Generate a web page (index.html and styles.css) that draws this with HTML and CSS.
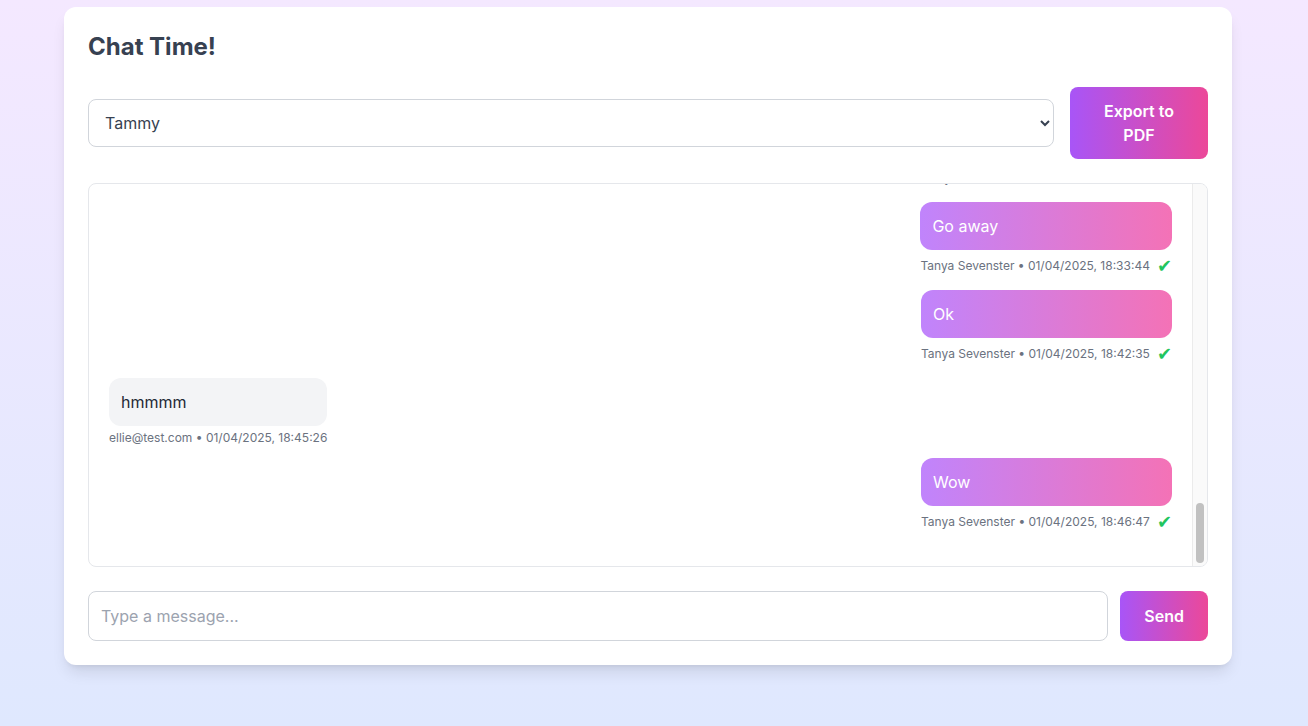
FILE: index.html
```html
<!DOCTYPE html>
<html lang="en">

<head>
    <meta charset="UTF-8">
    <meta name="viewport" content="width=device-width, initial-scale=1.0">
    <title>Chat Time!</title>
    <link rel="stylesheet" href="styles.css">
</head>

<body>
    <div class="card">
        <h1>Chat Time!</h1>

        <div class="toolbar">
            <select class="user-select">
                <option>Tammy</option>
                <option>Ellie</option>
                <option>Tanya</option>
            </select>
            <button class="btn export-btn">Export to PDF</button>
        </div>

        <div class="chat-box">
            <div class="chat-scroll" id="chat-scroll">
                <div class="messages" id="messages"></div>
            </div>
            <!-- custom scrollbar -->
            <div class="scrollbar">
                <div class="scroll-thumb" id="scroll-thumb"></div>
            </div>
        </div>

        <div class="composer">
            <input type="text" class="message-input" placeholder="Type a message...">
            <button class="btn send-btn">Send</button>
        </div>
    </div>

    <script>
        // messages for the selected conversation
        const me = "Tanya Sevenster";
        const history = [
            ["ellie@test.com", "Hello?", "01/04/2025, 16:48:09"],
            [me, "Yo", "01/04/2025, 16:55:31"],
            ["ellie@test.com", "Hey!", "01/04/2025, 17:02:11"],
            [me, "Hi Ellie", "01/04/2025, 17:03:40"],
            ["ellie@test.com", "How are you?", "01/04/2025, 17:05:02"],
            [me, "Good thanks, you?", "01/04/2025, 17:06:19"],
            ["ellie@test.com", "Not bad", "01/04/2025, 17:08:55"],
            [me, "Cool", "01/04/2025, 17:10:03"],
            ["ellie@test.com", "Are you coming tonight?", "01/04/2025, 17:21:37"],
            [me, "Maybe", "01/04/2025, 17:24:12"],
            ["ellie@test.com", "Come on", "01/04/2025, 17:25:48"],
            [me, "I'm tired", "01/04/2025, 17:31:20"],
            ["ellie@test.com", "It'll be fun", "01/04/2025, 17:33:09"],
            [me, "We'll see", "01/04/2025, 17:40:44"],
            ["ellie@test.com", "Tammy is coming too", "01/04/2025, 17:52:30"],
            [me, "Oh really", "01/04/2025, 17:55:01"],
            ["ellie@test.com", "Yes", "01/04/2025, 18:01:16"],
            [me, "Hmm ok", "01/04/2025, 18:05:58"],
            ["ellie@test.com", "So?", "01/04/2025, 18:12:27"],
            [me, "Still thinking", "01/04/2025, 18:15:39"],
            ["ellie@test.com", "Hurry up", "01/04/2025, 18:24:02"],
            [me, "Stop", "01/04/2025, 18:29:18"],
            ["ellie@test.com", "Please", "01/04/2025, 18:31:50"],
            [me, "Test", "01/04/2025, 18:32:51"],
            [me, "Go away", "01/04/2025, 18:33:44"],
            [me, "Ok", "01/04/2025, 18:42:35"],
            ["ellie@test.com", "hmmmm", "01/04/2025, 18:45:26"],
            [me, "Wow", "01/04/2025, 18:46:47"]
        ];

        function renderMessages() {
            const list = document.getElementById("messages");
            list.innerHTML = "";

            history.forEach(([sender, text, time]) => {
                const own = sender === me;
                const msg = document.createElement("div");
                msg.className = "msg " + (own ? "own" : "other");

                const bubble = document.createElement("div");
                bubble.className = "bubble";
                bubble.textContent = text;

                const meta = document.createElement("div");
                meta.className = "meta";
                meta.innerHTML = "<span>" + sender + " \u2022 " + time + "</span>" +
                    (own ? "<span class='tick'>\u2714</span>" : "");

                msg.appendChild(bubble);
                msg.appendChild(meta);
                list.appendChild(msg);
            });

            // keep the newest message in view
            const box = document.getElementById("chat-scroll");
            box.scrollTop = box.scrollHeight;
            updateThumb();
        }

        // size and place the scrollbar thumb
        function updateThumb() {
            const box = document.getElementById("chat-scroll");
            const thumb = document.getElementById("scroll-thumb");
            const track = box.clientHeight - 6;
            const size = Math.max(24, track * box.clientHeight / box.scrollHeight);
            const max = box.scrollHeight - box.clientHeight;
            const top = max > 0 ? (box.scrollTop / max) * (track - size) : 0;
            thumb.style.height = size + "px";
            thumb.style.top = (3 + top) + "px";
        }

        document.getElementById("chat-scroll").addEventListener("scroll", updateThumb);
        renderMessages();
    </script>
</body>

</html>
```

FILE: styles.css
```css
/* styles.css */
body {
    font-family: Inter, "Noto Sans", sans-serif;
    background: linear-gradient(to bottom, #f4e8ff, #dfe8fe);
    margin: 0;
    padding: 7px 0 0 64px;
    min-height: 100vh;
    box-sizing: border-box;
}

.card {
    width: 1168px;
    box-sizing: border-box;
    padding: 24px;
    background-color: white;
    border-radius: 12px;
    box-shadow: 0 10px 15px -3px rgba(0, 0, 0, 0.1), 0 4px 6px -4px rgba(0, 0, 0, 0.1);
}

h1 {
    margin: 0 0 24px;
    font-size: 24px;
    line-height: 32px;
    font-weight: 700;
    color: #374151;
}

.toolbar {
    display: flex;
    align-items: center;
    gap: 16px;
    margin-bottom: 24px;
}

.user-select {
    flex: 1;
    height: 48px;
    padding: 0 12px;
    font-family: inherit;
    font-size: 16px;
    color: #374151;
    background-color: white;
    border: 1px solid #d1d5db;
    border-radius: 8px;
}

.btn {
    font-family: inherit;
    font-size: 16px;
    line-height: 24px;
    font-weight: 600;
    color: white;
    border: none;
    border-radius: 8px;
    background: linear-gradient(to right, #a855f7, #ec4899);
    cursor: pointer;
}

.export-btn {
    width: 138px;
    padding: 12px 24px;
}

.chat-box {
    position: relative;
    height: 384px;
    box-sizing: border-box;
    overflow: hidden;
    border: 1px solid #e5e7eb;
    border-radius: 8px;
    margin-bottom: 24px;
}

.chat-scroll {
    height: 100%;
    box-sizing: border-box;
    overflow-y: auto;
    padding: 20px 35px 20px 20px;
    scrollbar-width: none;
}

.scrollbar {
    position: absolute;
    top: 0;
    right: 0;
    bottom: 0;
    width: 14px;
    background-color: #fafafa;
    border-left: 1px solid #ebebeb;
}

.scroll-thumb {
    position: absolute;
    left: 3px;
    width: 8px;
    background-color: #c1c1c1;
    border-radius: 4px;
}

.messages {
    display: flex;
    flex-direction: column;
}

.msg {
    display: flex;
    flex-direction: column;
    max-width: 70%;
    margin-bottom: 12px;
}

.msg.own {
    align-self: flex-end;
}

.msg.other {
    align-self: flex-start;
}

.bubble {
    padding: 12px;
    font-size: 16px;
    line-height: 24px;
    border-radius: 12px;
}

.own .bubble {
    color: white;
    background: linear-gradient(to right, #c084fc, #f472b6);
}

.other .bubble {
    color: #1f2937;
    background-color: #f3f4f6;
}

.meta {
    display: flex;
    align-items: center;
    gap: 7px;
    margin-top: 4px;
    font-size: 12px;
    line-height: 16px;
    color: #6b7280;
    white-space: nowrap;
}

.tick {
    font-family: "DejaVu Sans", sans-serif;
    font-size: 18px;
    line-height: 24px;
    color: #22c55e;
}

.composer {
    display: flex;
    gap: 12px;
}

.message-input {
    flex: 1;
    padding: 12px;
    font-family: inherit;
    font-size: 16px;
    line-height: 24px;
    color: #374151;
    border: 1px solid #d1d5db;
    border-radius: 8px;
}

.message-input::placeholder {
    color: #9ca3af;
}

.send-btn {
    padding: 12px 24px;
}
```
